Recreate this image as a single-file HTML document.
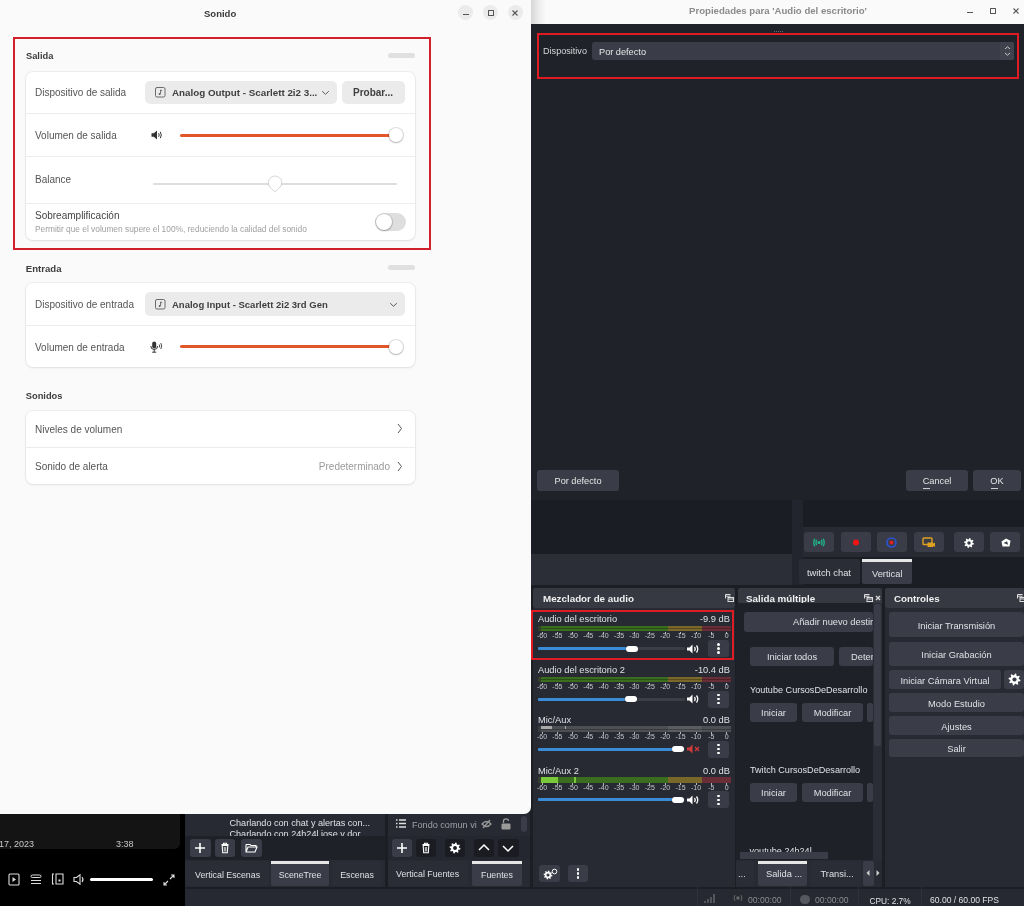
<!DOCTYPE html>
<html><head><meta charset="utf-8">
<style>
*{box-sizing:border-box;margin:0;padding:0}
html,body{width:1024px;height:906px;overflow:hidden;background:#1d1f26;font-family:"Liberation Sans",sans-serif;position:relative}
.t{-webkit-font-smoothing:antialiased}
body{will-change:transform}
.a{position:absolute}
.t{position:absolute;white-space:nowrap;line-height:1}
</style></head><body>
<div class="a" style="left:0px;top:0px;width:1024px;height:906px;background:#1c1e25;border-radius:0px;"></div>
<div class="a" style="left:531px;top:500px;width:261px;height:54px;background:#1b1d24;border-radius:0px;"></div>
<div class="a" style="left:531px;top:554px;width:261px;height:31px;background:#2b2e37;border-radius:0px;"></div>
<div class="a" style="left:792px;top:500px;width:11px;height:85px;background:#22252d;border-radius:0px;"></div>
<div class="a" style="left:803px;top:500px;width:221px;height:27px;background:#1b1d24;border-radius:0px;"></div>
<div class="a" style="left:803px;top:527px;width:221px;height:30px;background:#272a33;border-radius:0px;"></div>
<div class="a" style="left:804px;top:532px;width:30px;height:20px;background:#3a3d47;border-radius:3px;"></div>
<div class="a" style="left:841px;top:532px;width:30px;height:20px;background:#3a3d47;border-radius:3px;"></div>
<div class="a" style="left:877px;top:532px;width:30px;height:20px;background:#3a3d47;border-radius:3px;"></div>
<div class="a" style="left:914px;top:532px;width:30px;height:20px;background:#3a3d47;border-radius:3px;"></div>
<div class="a" style="left:954px;top:532px;width:30px;height:20px;background:#3a3d47;border-radius:3px;"></div>
<div class="a" style="left:990px;top:532px;width:30px;height:20px;background:#3a3d47;border-radius:3px;"></div>
<div class="a" style="left:799px;top:559px;width:61px;height:25px;background:#2a2d36;border-radius:2px;"></div>
<div class="t" style="left:807px;top:568.70px;font-size:9.3px;color:#dfe1e6;">twitch chat</div>
<div class="a" style="left:862px;top:559px;width:50px;height:25px;background:#3a3d47;border-radius:2px;"></div>
<div class="a" style="left:862px;top:559px;width:50px;height:3px;background:#e6e6e6;border-radius:0px;"></div>
<div class="t" style="left:872px;top:569.70px;font-size:9.3px;color:#dfe1e6;">Vertical</div>
<div class="a" style="left:533px;top:588px;width:202px;height:20px;background:#363942;border-radius:2px;"></div>
<div class="t" style="left:543px;top:594.27px;font-size:9.8px;color:#f0f0f0;font-weight:bold;">Mezclador de audio</div>
<div class="a" style="left:738px;top:588px;width:144px;height:15px;background:#363942;border-radius:0px;border-top-left-radius:2px;border-top-right-radius:2px"></div>
<div class="a" style="left:740px;top:588px;width:120px;height:14.5px;overflow:hidden"><div class="t" style="left:6px;top:5.7px;font-size:9.8px;color:#f0f0f0;font-weight:bold">Salida múltiple</div></div>
<div class="a" style="left:885px;top:588px;width:139px;height:20px;background:#363942;border-radius:2px;"></div>
<div class="t" style="left:894px;top:594.27px;font-size:9.8px;color:#f0f0f0;font-weight:bold;">Controles</div>
<div class="a" style="left:533px;top:608px;width:202px;height:279px;background:#272a33;border-radius:0px;"></div>
<div class="a" style="left:738px;top:608px;width:144px;height:279px;background:#272a33;border-radius:0px;"></div>
<div class="a" style="left:736px;top:602.5px;width:136.5px;height:257.5px;background:#1f2128;border-radius:0px;"></div>
<div class="a" style="left:872.5px;top:602.5px;width:9.5px;height:257.5px;background:#2a2d36;border-radius:0px;"></div>
<div class="a" style="left:885px;top:608px;width:139px;height:279px;background:#272a33;border-radius:0px;"></div>
<div class="a" style="left:0px;top:887px;width:1024px;height:1.5px;background:#1c1e25;border-radius:0px;"></div>
<div class="a" style="left:0px;top:888.5px;width:1024px;height:17.5px;background:#262931;border-radius:0px;"></div>
<div class="a" style="left:185px;top:813px;width:200px;height:74px;background:#272a33;border-radius:0px;"></div>
<div class="a" style="left:185px;top:813px;width:199px;height:23px;background:#272a33;border-radius:0px;"></div>
<div class="a" style="left:185px;top:836px;width:200px;height:24px;background:#1f2128;border-radius:0px;"></div>
<div class="a" style="left:388px;top:813px;width:142px;height:74px;background:#272a33;border-radius:0px;"></div>
<div class="a" style="left:388px;top:836px;width:142px;height:24px;background:#24272f;border-radius:0px;"></div>
<div class="a" style="left:0px;top:813px;width:185px;height:93px;background:#000000;border-radius:0px;"></div>
<div class="a" style="left:0px;top:813px;width:180px;height:36px;background:#141414;border-radius:0px;border-bottom-right-radius:6px"></div>
<div class="t" style="left:538px;top:615.20px;font-size:9.3px;color:#dfe1e6;">Audio del escritorio</div>
<div class="t" style="left:430px;width:300px;text-align:right;top:615.20px;font-size:9.3px;color:#dfe1e6;">-9.9 dB</div>
<div class="a" style="left:538px;top:625.8px;width:130px;height:5.600000000000023px;background:#3a6e1e;border-radius:0px;filter:brightness(0.72)"></div>
<div class="a" style="left:538px;top:625.8px;width:130px;height:2.3999999999999773px;background:#3a6e1e;border-radius:0px;"></div>
<div class="a" style="left:538px;top:629.0px;width:130px;height:2.3999999999999773px;background:#3a6e1e;border-radius:0px;"></div>
<div class="a" style="left:668px;top:625.8px;width:34px;height:5.600000000000023px;background:#7a682a;border-radius:0px;filter:brightness(0.72)"></div>
<div class="a" style="left:668px;top:625.8px;width:34px;height:2.3999999999999773px;background:#7a682a;border-radius:0px;"></div>
<div class="a" style="left:668px;top:629.0px;width:34px;height:2.3999999999999773px;background:#7a682a;border-radius:0px;"></div>
<div class="a" style="left:702px;top:625.8px;width:29px;height:5.600000000000023px;background:#6a2e38;border-radius:0px;filter:brightness(0.72)"></div>
<div class="a" style="left:702px;top:625.8px;width:29px;height:2.3999999999999773px;background:#6a2e38;border-radius:0px;"></div>
<div class="a" style="left:702px;top:629.0px;width:29px;height:2.3999999999999773px;background:#6a2e38;border-radius:0px;"></div>
<div class="a" style="left:538px;top:625.8px;width:3px;height:5.600000000000023px;background:#34402c;border-radius:0px;"></div>
<div class="a" style="left:541.5px;top:631.8px;width:1.0px;height:2.0px;background:#b8b8b8;border-radius:0px;"></div>
<div class="t" style="left:392.0px;width:300px;text-align:center;top:632.45px;font-size:7px;color:#c4c6cc;">-60</div>
<div class="a" style="left:556.9px;top:631.8px;width:1.0px;height:2.0px;background:#b8b8b8;border-radius:0px;"></div>
<div class="t" style="left:407.4px;width:300px;text-align:center;top:632.45px;font-size:7px;color:#c4c6cc;">-55</div>
<div class="a" style="left:572.3px;top:631.8px;width:1.0px;height:2.0px;background:#b8b8b8;border-radius:0px;"></div>
<div class="t" style="left:422.79999999999995px;width:300px;text-align:center;top:632.45px;font-size:7px;color:#c4c6cc;">-50</div>
<div class="a" style="left:587.7px;top:631.8px;width:1.0px;height:2.0px;background:#b8b8b8;border-radius:0px;"></div>
<div class="t" style="left:438.20000000000005px;width:300px;text-align:center;top:632.45px;font-size:7px;color:#c4c6cc;">-45</div>
<div class="a" style="left:603.1px;top:631.8px;width:1.0px;height:2.0px;background:#b8b8b8;border-radius:0px;"></div>
<div class="t" style="left:453.6px;width:300px;text-align:center;top:632.45px;font-size:7px;color:#c4c6cc;">-40</div>
<div class="a" style="left:618.5px;top:631.8px;width:1.0px;height:2.0px;background:#b8b8b8;border-radius:0px;"></div>
<div class="t" style="left:469.0px;width:300px;text-align:center;top:632.45px;font-size:7px;color:#c4c6cc;">-35</div>
<div class="a" style="left:633.9px;top:631.8px;width:1.0px;height:2.0px;background:#b8b8b8;border-radius:0px;"></div>
<div class="t" style="left:484.4px;width:300px;text-align:center;top:632.45px;font-size:7px;color:#c4c6cc;">-30</div>
<div class="a" style="left:649.3px;top:631.8px;width:1.0px;height:2.0px;background:#b8b8b8;border-radius:0px;"></div>
<div class="t" style="left:499.79999999999995px;width:300px;text-align:center;top:632.45px;font-size:7px;color:#c4c6cc;">-25</div>
<div class="a" style="left:664.7px;top:631.8px;width:1.0px;height:2.0px;background:#b8b8b8;border-radius:0px;"></div>
<div class="t" style="left:515.2px;width:300px;text-align:center;top:632.45px;font-size:7px;color:#c4c6cc;">-20</div>
<div class="a" style="left:680.1px;top:631.8px;width:1.0px;height:2.0px;background:#b8b8b8;border-radius:0px;"></div>
<div class="t" style="left:530.6px;width:300px;text-align:center;top:632.45px;font-size:7px;color:#c4c6cc;">-15</div>
<div class="a" style="left:695.5px;top:631.8px;width:1.0px;height:2.0px;background:#b8b8b8;border-radius:0px;"></div>
<div class="t" style="left:546.0px;width:300px;text-align:center;top:632.45px;font-size:7px;color:#c4c6cc;">-10</div>
<div class="a" style="left:710.9px;top:631.8px;width:1.0px;height:2.0px;background:#b8b8b8;border-radius:0px;"></div>
<div class="t" style="left:561.4px;width:300px;text-align:center;top:632.45px;font-size:7px;color:#c4c6cc;">-5</div>
<div class="a" style="left:726.3px;top:631.8px;width:1.0px;height:2.0px;background:#b8b8b8;border-radius:0px;"></div>
<div class="t" style="left:576.8px;width:300px;text-align:center;top:632.45px;font-size:7px;color:#c4c6cc;">0</div>
<div class="a" style="left:538px;top:647.0px;width:147px;height:3.0px;background:#3b3e47;border-radius:1px;"></div>
<div class="a" style="left:538px;top:647.0px;width:88px;height:3.0px;background:#3b8cd6;border-radius:1px;"></div>
<div class="a" style="left:626px;top:645.5px;width:12px;height:6.0px;background:#ffffff;border-radius:3px;"></div>
<svg class="a" style="left:687px;top:643.5px;" width="13" height="10" viewBox="0 0 13 10"><path d="M0 3.5H2.5L5.5 0.5V9.5L2.5 6.5H0Z" fill="#ffffff"/><path d="M7.5 3Q9 5 7.5 7M9.5 1.5Q12 5 9.5 8.5" stroke="#ffffff" stroke-width="1.3" fill="none"/></svg>
<div class="a" style="left:708px;top:640.0px;width:21px;height:17.0px;background:#3a3d47;border-radius:3px;"></div>
<div class="a" style="left:717.3px;top:643.3px;width:2.400000000000091px;height:2.400000000000091px;background:#ffffff;border-radius:2px;"></div>
<div class="a" style="left:717.3px;top:647.3px;width:2.400000000000091px;height:2.400000000000091px;background:#ffffff;border-radius:2px;"></div>
<div class="a" style="left:717.3px;top:651.3px;width:2.400000000000091px;height:2.400000000000091px;background:#ffffff;border-radius:2px;"></div>
<div class="t" style="left:538px;top:665.90px;font-size:9.3px;color:#dfe1e6;">Audio del escritorio 2</div>
<div class="t" style="left:430px;width:300px;text-align:right;top:665.90px;font-size:9.3px;color:#dfe1e6;">-10.4 dB</div>
<div class="a" style="left:538px;top:676.5px;width:130px;height:5.600000000000023px;background:#3a6e1e;border-radius:0px;filter:brightness(0.72)"></div>
<div class="a" style="left:538px;top:676.5px;width:130px;height:2.3999999999999773px;background:#3a6e1e;border-radius:0px;"></div>
<div class="a" style="left:538px;top:679.7px;width:130px;height:2.3999999999999773px;background:#3a6e1e;border-radius:0px;"></div>
<div class="a" style="left:668px;top:676.5px;width:34px;height:5.600000000000023px;background:#7a682a;border-radius:0px;filter:brightness(0.72)"></div>
<div class="a" style="left:668px;top:676.5px;width:34px;height:2.3999999999999773px;background:#7a682a;border-radius:0px;"></div>
<div class="a" style="left:668px;top:679.7px;width:34px;height:2.3999999999999773px;background:#7a682a;border-radius:0px;"></div>
<div class="a" style="left:702px;top:676.5px;width:29px;height:5.600000000000023px;background:#6a2e38;border-radius:0px;filter:brightness(0.72)"></div>
<div class="a" style="left:702px;top:676.5px;width:29px;height:2.3999999999999773px;background:#6a2e38;border-radius:0px;"></div>
<div class="a" style="left:702px;top:679.7px;width:29px;height:2.3999999999999773px;background:#6a2e38;border-radius:0px;"></div>
<div class="a" style="left:538px;top:676.5px;width:3px;height:5.600000000000023px;background:#34402c;border-radius:0px;"></div>
<div class="a" style="left:541.5px;top:682.5px;width:1.0px;height:2.0px;background:#b8b8b8;border-radius:0px;"></div>
<div class="t" style="left:392.0px;width:300px;text-align:center;top:683.15px;font-size:7px;color:#c4c6cc;">-60</div>
<div class="a" style="left:556.9px;top:682.5px;width:1.0px;height:2.0px;background:#b8b8b8;border-radius:0px;"></div>
<div class="t" style="left:407.4px;width:300px;text-align:center;top:683.15px;font-size:7px;color:#c4c6cc;">-55</div>
<div class="a" style="left:572.3px;top:682.5px;width:1.0px;height:2.0px;background:#b8b8b8;border-radius:0px;"></div>
<div class="t" style="left:422.79999999999995px;width:300px;text-align:center;top:683.15px;font-size:7px;color:#c4c6cc;">-50</div>
<div class="a" style="left:587.7px;top:682.5px;width:1.0px;height:2.0px;background:#b8b8b8;border-radius:0px;"></div>
<div class="t" style="left:438.20000000000005px;width:300px;text-align:center;top:683.15px;font-size:7px;color:#c4c6cc;">-45</div>
<div class="a" style="left:603.1px;top:682.5px;width:1.0px;height:2.0px;background:#b8b8b8;border-radius:0px;"></div>
<div class="t" style="left:453.6px;width:300px;text-align:center;top:683.15px;font-size:7px;color:#c4c6cc;">-40</div>
<div class="a" style="left:618.5px;top:682.5px;width:1.0px;height:2.0px;background:#b8b8b8;border-radius:0px;"></div>
<div class="t" style="left:469.0px;width:300px;text-align:center;top:683.15px;font-size:7px;color:#c4c6cc;">-35</div>
<div class="a" style="left:633.9px;top:682.5px;width:1.0px;height:2.0px;background:#b8b8b8;border-radius:0px;"></div>
<div class="t" style="left:484.4px;width:300px;text-align:center;top:683.15px;font-size:7px;color:#c4c6cc;">-30</div>
<div class="a" style="left:649.3px;top:682.5px;width:1.0px;height:2.0px;background:#b8b8b8;border-radius:0px;"></div>
<div class="t" style="left:499.79999999999995px;width:300px;text-align:center;top:683.15px;font-size:7px;color:#c4c6cc;">-25</div>
<div class="a" style="left:664.7px;top:682.5px;width:1.0px;height:2.0px;background:#b8b8b8;border-radius:0px;"></div>
<div class="t" style="left:515.2px;width:300px;text-align:center;top:683.15px;font-size:7px;color:#c4c6cc;">-20</div>
<div class="a" style="left:680.1px;top:682.5px;width:1.0px;height:2.0px;background:#b8b8b8;border-radius:0px;"></div>
<div class="t" style="left:530.6px;width:300px;text-align:center;top:683.15px;font-size:7px;color:#c4c6cc;">-15</div>
<div class="a" style="left:695.5px;top:682.5px;width:1.0px;height:2.0px;background:#b8b8b8;border-radius:0px;"></div>
<div class="t" style="left:546.0px;width:300px;text-align:center;top:683.15px;font-size:7px;color:#c4c6cc;">-10</div>
<div class="a" style="left:710.9px;top:682.5px;width:1.0px;height:2.0px;background:#b8b8b8;border-radius:0px;"></div>
<div class="t" style="left:561.4px;width:300px;text-align:center;top:683.15px;font-size:7px;color:#c4c6cc;">-5</div>
<div class="a" style="left:726.3px;top:682.5px;width:1.0px;height:2.0px;background:#b8b8b8;border-radius:0px;"></div>
<div class="t" style="left:576.8px;width:300px;text-align:center;top:683.15px;font-size:7px;color:#c4c6cc;">0</div>
<div class="a" style="left:538px;top:697.7px;width:147px;height:3.0px;background:#3b3e47;border-radius:1px;"></div>
<div class="a" style="left:538px;top:697.7px;width:86.5px;height:3.0px;background:#3b8cd6;border-radius:1px;"></div>
<div class="a" style="left:624.5px;top:696.2px;width:12.0px;height:6.0px;background:#ffffff;border-radius:3px;"></div>
<svg class="a" style="left:687px;top:694.2px;" width="13" height="10" viewBox="0 0 13 10"><path d="M0 3.5H2.5L5.5 0.5V9.5L2.5 6.5H0Z" fill="#ffffff"/><path d="M7.5 3Q9 5 7.5 7M9.5 1.5Q12 5 9.5 8.5" stroke="#ffffff" stroke-width="1.3" fill="none"/></svg>
<div class="a" style="left:708px;top:690.7px;width:21px;height:17.0px;background:#3a3d47;border-radius:3px;"></div>
<div class="a" style="left:717.3px;top:694.0px;width:2.400000000000091px;height:2.400000000000091px;background:#ffffff;border-radius:2px;"></div>
<div class="a" style="left:717.3px;top:698.0px;width:2.400000000000091px;height:2.400000000000091px;background:#ffffff;border-radius:2px;"></div>
<div class="a" style="left:717.3px;top:702.0px;width:2.400000000000091px;height:2.400000000000091px;background:#ffffff;border-radius:2px;"></div>
<div class="t" style="left:538px;top:715.70px;font-size:9.3px;color:#dfe1e6;">Mic/Aux</div>
<div class="t" style="left:430px;width:300px;text-align:right;top:715.70px;font-size:9.3px;color:#dfe1e6;">0.0 dB</div>
<div class="a" style="left:538px;top:726.3px;width:130px;height:5.600000000000023px;background:#4d4f55;border-radius:0px;filter:brightness(0.72)"></div>
<div class="a" style="left:538px;top:726.3px;width:130px;height:2.3999999999999773px;background:#4d4f55;border-radius:0px;"></div>
<div class="a" style="left:538px;top:729.5px;width:130px;height:2.3999999999999773px;background:#4d4f55;border-radius:0px;"></div>
<div class="a" style="left:668px;top:726.3px;width:34px;height:5.600000000000023px;background:#5a5c61;border-radius:0px;filter:brightness(0.72)"></div>
<div class="a" style="left:668px;top:726.3px;width:34px;height:2.3999999999999773px;background:#5a5c61;border-radius:0px;"></div>
<div class="a" style="left:668px;top:729.5px;width:34px;height:2.3999999999999773px;background:#5a5c61;border-radius:0px;"></div>
<div class="a" style="left:702px;top:726.3px;width:29px;height:5.600000000000023px;background:#4d4f55;border-radius:0px;filter:brightness(0.72)"></div>
<div class="a" style="left:702px;top:726.3px;width:29px;height:2.3999999999999773px;background:#4d4f55;border-radius:0px;"></div>
<div class="a" style="left:702px;top:729.5px;width:29px;height:2.3999999999999773px;background:#4d4f55;border-radius:0px;"></div>
<div class="a" style="left:538px;top:726.3px;width:3px;height:5.600000000000023px;background:#3a3c40;border-radius:0px;"></div>
<div class="a" style="left:541px;top:726.3px;width:11px;height:2.3999999999999773px;background:#a8a8a8;border-radius:0px;"></div>
<div class="a" style="left:564.5px;top:726.3px;width:1.5px;height:2.3999999999999773px;background:#a8a8a8;border-radius:0px;"></div>
<div class="a" style="left:541.5px;top:732.3px;width:1.0px;height:2.0px;background:#b8b8b8;border-radius:0px;"></div>
<div class="t" style="left:392.0px;width:300px;text-align:center;top:732.95px;font-size:7px;color:#c4c6cc;">-60</div>
<div class="a" style="left:556.9px;top:732.3px;width:1.0px;height:2.0px;background:#b8b8b8;border-radius:0px;"></div>
<div class="t" style="left:407.4px;width:300px;text-align:center;top:732.95px;font-size:7px;color:#c4c6cc;">-55</div>
<div class="a" style="left:572.3px;top:732.3px;width:1.0px;height:2.0px;background:#b8b8b8;border-radius:0px;"></div>
<div class="t" style="left:422.79999999999995px;width:300px;text-align:center;top:732.95px;font-size:7px;color:#c4c6cc;">-50</div>
<div class="a" style="left:587.7px;top:732.3px;width:1.0px;height:2.0px;background:#b8b8b8;border-radius:0px;"></div>
<div class="t" style="left:438.20000000000005px;width:300px;text-align:center;top:732.95px;font-size:7px;color:#c4c6cc;">-45</div>
<div class="a" style="left:603.1px;top:732.3px;width:1.0px;height:2.0px;background:#b8b8b8;border-radius:0px;"></div>
<div class="t" style="left:453.6px;width:300px;text-align:center;top:732.95px;font-size:7px;color:#c4c6cc;">-40</div>
<div class="a" style="left:618.5px;top:732.3px;width:1.0px;height:2.0px;background:#b8b8b8;border-radius:0px;"></div>
<div class="t" style="left:469.0px;width:300px;text-align:center;top:732.95px;font-size:7px;color:#c4c6cc;">-35</div>
<div class="a" style="left:633.9px;top:732.3px;width:1.0px;height:2.0px;background:#b8b8b8;border-radius:0px;"></div>
<div class="t" style="left:484.4px;width:300px;text-align:center;top:732.95px;font-size:7px;color:#c4c6cc;">-30</div>
<div class="a" style="left:649.3px;top:732.3px;width:1.0px;height:2.0px;background:#b8b8b8;border-radius:0px;"></div>
<div class="t" style="left:499.79999999999995px;width:300px;text-align:center;top:732.95px;font-size:7px;color:#c4c6cc;">-25</div>
<div class="a" style="left:664.7px;top:732.3px;width:1.0px;height:2.0px;background:#b8b8b8;border-radius:0px;"></div>
<div class="t" style="left:515.2px;width:300px;text-align:center;top:732.95px;font-size:7px;color:#c4c6cc;">-20</div>
<div class="a" style="left:680.1px;top:732.3px;width:1.0px;height:2.0px;background:#b8b8b8;border-radius:0px;"></div>
<div class="t" style="left:530.6px;width:300px;text-align:center;top:732.95px;font-size:7px;color:#c4c6cc;">-15</div>
<div class="a" style="left:695.5px;top:732.3px;width:1.0px;height:2.0px;background:#b8b8b8;border-radius:0px;"></div>
<div class="t" style="left:546.0px;width:300px;text-align:center;top:732.95px;font-size:7px;color:#c4c6cc;">-10</div>
<div class="a" style="left:710.9px;top:732.3px;width:1.0px;height:2.0px;background:#b8b8b8;border-radius:0px;"></div>
<div class="t" style="left:561.4px;width:300px;text-align:center;top:732.95px;font-size:7px;color:#c4c6cc;">-5</div>
<div class="a" style="left:726.3px;top:732.3px;width:1.0px;height:2.0px;background:#b8b8b8;border-radius:0px;"></div>
<div class="t" style="left:576.8px;width:300px;text-align:center;top:732.95px;font-size:7px;color:#c4c6cc;">0</div>
<div class="a" style="left:538px;top:747.5px;width:147px;height:3.0px;background:#3b3e47;border-radius:1px;"></div>
<div class="a" style="left:538px;top:747.5px;width:134px;height:3.0px;background:#3b8cd6;border-radius:1px;"></div>
<div class="a" style="left:672px;top:746px;width:12px;height:6px;background:#ffffff;border-radius:3px;"></div>
<svg class="a" style="left:687px;top:744px;" width="13" height="10" viewBox="0 0 13 10"><path d="M0 3.5H2.5L5.5 0.5V9.5L2.5 6.5H0Z" fill="#d03b3b"/><path d="M8 3L12 7M12 3L8 7" stroke="#d03b3b" stroke-width="1.3"/></svg>
<div class="a" style="left:708px;top:740.5px;width:21px;height:17.0px;background:#3a3d47;border-radius:3px;"></div>
<div class="a" style="left:717.3px;top:743.8px;width:2.400000000000091px;height:2.400000000000091px;background:#ffffff;border-radius:2px;"></div>
<div class="a" style="left:717.3px;top:747.8px;width:2.400000000000091px;height:2.400000000000091px;background:#ffffff;border-radius:2px;"></div>
<div class="a" style="left:717.3px;top:751.8px;width:2.400000000000091px;height:2.400000000000091px;background:#ffffff;border-radius:2px;"></div>
<div class="t" style="left:538px;top:766.60px;font-size:9.3px;color:#dfe1e6;">Mic/Aux 2</div>
<div class="t" style="left:430px;width:300px;text-align:right;top:766.60px;font-size:9.3px;color:#dfe1e6;">0.0 dB</div>
<div class="a" style="left:538px;top:777.1999999999999px;width:130px;height:5.600000000000023px;background:#3a6e1e;border-radius:0px;filter:brightness(0.72)"></div>
<div class="a" style="left:538px;top:777.1999999999999px;width:130px;height:2.3999999999999773px;background:#3a6e1e;border-radius:0px;"></div>
<div class="a" style="left:538px;top:780.4px;width:130px;height:2.3999999999999773px;background:#3a6e1e;border-radius:0px;"></div>
<div class="a" style="left:668px;top:777.1999999999999px;width:34px;height:5.600000000000023px;background:#7a682a;border-radius:0px;filter:brightness(0.72)"></div>
<div class="a" style="left:668px;top:777.1999999999999px;width:34px;height:2.3999999999999773px;background:#7a682a;border-radius:0px;"></div>
<div class="a" style="left:668px;top:780.4px;width:34px;height:2.3999999999999773px;background:#7a682a;border-radius:0px;"></div>
<div class="a" style="left:702px;top:777.1999999999999px;width:29px;height:5.600000000000023px;background:#6a2e38;border-radius:0px;filter:brightness(0.72)"></div>
<div class="a" style="left:702px;top:777.1999999999999px;width:29px;height:2.3999999999999773px;background:#6a2e38;border-radius:0px;"></div>
<div class="a" style="left:702px;top:780.4px;width:29px;height:2.3999999999999773px;background:#6a2e38;border-radius:0px;"></div>
<div class="a" style="left:538px;top:777.1999999999999px;width:3px;height:5.600000000000023px;background:#34402c;border-radius:0px;"></div>
<div class="a" style="left:541px;top:777.1999999999999px;width:17px;height:2.3999999999999773px;background:#78c83a;border-radius:0px;"></div>
<div class="a" style="left:541px;top:780.4px;width:17px;height:2.3999999999999773px;background:#78c83a;border-radius:0px;"></div>
<div class="a" style="left:574px;top:777.1999999999999px;width:2px;height:5.600000000000023px;background:#78c83a;border-radius:0px;"></div>
<div class="a" style="left:541.5px;top:783.1999999999999px;width:1.0px;height:2.0px;background:#b8b8b8;border-radius:0px;"></div>
<div class="t" style="left:392.0px;width:300px;text-align:center;top:783.85px;font-size:7px;color:#c4c6cc;">-60</div>
<div class="a" style="left:556.9px;top:783.1999999999999px;width:1.0px;height:2.0px;background:#b8b8b8;border-radius:0px;"></div>
<div class="t" style="left:407.4px;width:300px;text-align:center;top:783.85px;font-size:7px;color:#c4c6cc;">-55</div>
<div class="a" style="left:572.3px;top:783.1999999999999px;width:1.0px;height:2.0px;background:#b8b8b8;border-radius:0px;"></div>
<div class="t" style="left:422.79999999999995px;width:300px;text-align:center;top:783.85px;font-size:7px;color:#c4c6cc;">-50</div>
<div class="a" style="left:587.7px;top:783.1999999999999px;width:1.0px;height:2.0px;background:#b8b8b8;border-radius:0px;"></div>
<div class="t" style="left:438.20000000000005px;width:300px;text-align:center;top:783.85px;font-size:7px;color:#c4c6cc;">-45</div>
<div class="a" style="left:603.1px;top:783.1999999999999px;width:1.0px;height:2.0px;background:#b8b8b8;border-radius:0px;"></div>
<div class="t" style="left:453.6px;width:300px;text-align:center;top:783.85px;font-size:7px;color:#c4c6cc;">-40</div>
<div class="a" style="left:618.5px;top:783.1999999999999px;width:1.0px;height:2.0px;background:#b8b8b8;border-radius:0px;"></div>
<div class="t" style="left:469.0px;width:300px;text-align:center;top:783.85px;font-size:7px;color:#c4c6cc;">-35</div>
<div class="a" style="left:633.9px;top:783.1999999999999px;width:1.0px;height:2.0px;background:#b8b8b8;border-radius:0px;"></div>
<div class="t" style="left:484.4px;width:300px;text-align:center;top:783.85px;font-size:7px;color:#c4c6cc;">-30</div>
<div class="a" style="left:649.3px;top:783.1999999999999px;width:1.0px;height:2.0px;background:#b8b8b8;border-radius:0px;"></div>
<div class="t" style="left:499.79999999999995px;width:300px;text-align:center;top:783.85px;font-size:7px;color:#c4c6cc;">-25</div>
<div class="a" style="left:664.7px;top:783.1999999999999px;width:1.0px;height:2.0px;background:#b8b8b8;border-radius:0px;"></div>
<div class="t" style="left:515.2px;width:300px;text-align:center;top:783.85px;font-size:7px;color:#c4c6cc;">-20</div>
<div class="a" style="left:680.1px;top:783.1999999999999px;width:1.0px;height:2.0px;background:#b8b8b8;border-radius:0px;"></div>
<div class="t" style="left:530.6px;width:300px;text-align:center;top:783.85px;font-size:7px;color:#c4c6cc;">-15</div>
<div class="a" style="left:695.5px;top:783.1999999999999px;width:1.0px;height:2.0px;background:#b8b8b8;border-radius:0px;"></div>
<div class="t" style="left:546.0px;width:300px;text-align:center;top:783.85px;font-size:7px;color:#c4c6cc;">-10</div>
<div class="a" style="left:710.9px;top:783.1999999999999px;width:1.0px;height:2.0px;background:#b8b8b8;border-radius:0px;"></div>
<div class="t" style="left:561.4px;width:300px;text-align:center;top:783.85px;font-size:7px;color:#c4c6cc;">-5</div>
<div class="a" style="left:726.3px;top:783.1999999999999px;width:1.0px;height:2.0px;background:#b8b8b8;border-radius:0px;"></div>
<div class="t" style="left:576.8px;width:300px;text-align:center;top:783.85px;font-size:7px;color:#c4c6cc;">0</div>
<div class="a" style="left:538px;top:798.4px;width:147px;height:3.0px;background:#3b3e47;border-radius:1px;"></div>
<div class="a" style="left:538px;top:798.4px;width:134px;height:3.0px;background:#3b8cd6;border-radius:1px;"></div>
<div class="a" style="left:672px;top:796.9px;width:12px;height:6.0px;background:#ffffff;border-radius:3px;"></div>
<svg class="a" style="left:687px;top:794.9px;" width="13" height="10" viewBox="0 0 13 10"><path d="M0 3.5H2.5L5.5 0.5V9.5L2.5 6.5H0Z" fill="#ffffff"/><path d="M7.5 3Q9 5 7.5 7M9.5 1.5Q12 5 9.5 8.5" stroke="#ffffff" stroke-width="1.3" fill="none"/></svg>
<div class="a" style="left:708px;top:791.4px;width:21px;height:17.0px;background:#3a3d47;border-radius:3px;"></div>
<div class="a" style="left:717.3px;top:794.6999999999999px;width:2.400000000000091px;height:2.400000000000091px;background:#ffffff;border-radius:2px;"></div>
<div class="a" style="left:717.3px;top:798.6999999999999px;width:2.400000000000091px;height:2.400000000000091px;background:#ffffff;border-radius:2px;"></div>
<div class="a" style="left:717.3px;top:802.6999999999999px;width:2.400000000000091px;height:2.400000000000091px;background:#ffffff;border-radius:2px;"></div>
<div class="a" style="left:531px;top:610px;width:203px;height:50px;background:transparent;border-radius:0px;border:2.5px solid #e01b24"></div>
<div class="a" style="left:539px;top:865px;width:21px;height:17px;background:#3a3d47;border-radius:3px;"></div>
<div class="a" style="left:568px;top:865px;width:20px;height:17px;background:#3a3d47;border-radius:3px;"></div>
<div class="a" style="left:576.8px;top:868.3px;width:2.400000000000091px;height:2.400000000000091px;background:#fff;border-radius:2px;"></div>
<div class="a" style="left:576.8px;top:872.3px;width:2.400000000000091px;height:2.400000000000091px;background:#fff;border-radius:2px;"></div>
<div class="a" style="left:576.8px;top:876.3px;width:2.400000000000091px;height:2.400000000000091px;background:#fff;border-radius:2px;"></div>
<div class="a" style="left:744px;top:612px;width:129px;height:20px;background:#3a3d47;border-radius:3px;"></div>
<div class="t" style="left:793px;top:618.20px;font-size:9.3px;color:#dfe1e6;width:80px;overflow:hidden;">Añadir nuevo destir</div>
<div class="a" style="left:750px;top:647px;width:84px;height:19px;background:#3a3d47;border-radius:3px;"></div>
<div class="t" style="left:642px;width:300px;text-align:center;top:652.70px;font-size:9.3px;color:#dfe1e6;">Iniciar todos</div>
<div class="a" style="left:839px;top:647px;width:34px;height:19px;background:#3a3d47;border-radius:3px;"></div>
<div class="t" style="left:851px;top:652.70px;font-size:9.3px;color:#dfe1e6;width:22px;overflow:hidden;">Deter</div>
<div class="t" style="left:750px;top:686.37px;font-size:9.1px;color:#dfe1e6;">Youtube CursosDeDesarrollo</div>
<div class="a" style="left:750px;top:703px;width:47px;height:19px;background:#3a3d47;border-radius:3px;"></div>
<div class="t" style="left:623.5px;width:300px;text-align:center;top:709.20px;font-size:9.3px;color:#dfe1e6;">Iniciar</div>
<div class="a" style="left:802px;top:703px;width:61px;height:19px;background:#3a3d47;border-radius:3px;"></div>
<div class="t" style="left:682.5px;width:300px;text-align:center;top:709.20px;font-size:9.3px;color:#dfe1e6;">Modificar</div>
<div class="a" style="left:867px;top:703px;width:6px;height:19px;background:#3a3d47;border-radius:2px;"></div>
<div class="t" style="left:750px;top:766.37px;font-size:9.1px;color:#dfe1e6;">Twitch CursosDeDesarrollo</div>
<div class="a" style="left:750px;top:783px;width:47px;height:19px;background:#3a3d47;border-radius:3px;"></div>
<div class="t" style="left:623.5px;width:300px;text-align:center;top:789.20px;font-size:9.3px;color:#dfe1e6;">Iniciar</div>
<div class="a" style="left:802px;top:783px;width:61px;height:19px;background:#3a3d47;border-radius:3px;"></div>
<div class="t" style="left:682.5px;width:300px;text-align:center;top:789.20px;font-size:9.3px;color:#dfe1e6;">Modificar</div>
<div class="a" style="left:867px;top:783px;width:6px;height:19px;background:#3a3d47;border-radius:2px;"></div>
<div class="a" style="left:874px;top:604px;width:6.5px;height:142px;background:#3a3d47;border-radius:2px;"></div>
<div class="a" style="left:889px;top:612px;width:135px;height:25px;background:#3a3d47;border-radius:3px;"></div>
<div class="t" style="left:806.5px;width:300px;text-align:center;top:621.70px;font-size:9.3px;color:#dfe1e6;">Iniciar Transmisión</div>
<div class="a" style="left:889px;top:642px;width:135px;height:24px;background:#3a3d47;border-radius:3px;"></div>
<div class="t" style="left:806.5px;width:300px;text-align:center;top:651.20px;font-size:9.3px;color:#dfe1e6;">Iniciar Grabación</div>
<div class="a" style="left:889px;top:670px;width:112px;height:19px;background:#3a3d47;border-radius:3px;"></div>
<div class="t" style="left:795.0px;width:300px;text-align:center;top:676.70px;font-size:9.3px;color:#dfe1e6;">Iniciar Cámara Virtual</div>
<div class="a" style="left:1004px;top:670px;width:20px;height:19px;background:#3a3d47;border-radius:3px;"></div>
<div class="a" style="left:889px;top:693px;width:135px;height:19px;background:#3a3d47;border-radius:3px;"></div>
<div class="t" style="left:806.5px;width:300px;text-align:center;top:699.70px;font-size:9.3px;color:#dfe1e6;">Modo Estudio</div>
<div class="a" style="left:889px;top:716px;width:135px;height:19px;background:#3a3d47;border-radius:3px;"></div>
<div class="t" style="left:806.5px;width:300px;text-align:center;top:722.70px;font-size:9.3px;color:#dfe1e6;">Ajustes</div>
<div class="a" style="left:889px;top:739px;width:135px;height:18px;background:#3a3d47;border-radius:3px;"></div>
<div class="t" style="left:806.5px;width:300px;text-align:center;top:745.20px;font-size:9.3px;color:#dfe1e6;">Salir</div>
<div class="a" style="left:749px;top:840px;width:120px;height:12px;overflow:hidden"><div class="t" style="left:0.5px;top:7.3px;font-size:9.1px;color:#dfe1e6">youtube 24h24l</div></div>
<div class="a" style="left:740px;top:852px;width:88px;height:6.5px;background:#3a3d47;border-radius:0px;"></div>
<div class="a" style="left:736px;top:860px;width:146px;height:27px;background:#272a33;border-radius:0px;"></div>
<div class="a" style="left:736px;top:861px;width:18px;height:25px;background:#2a2d36;border-radius:2px;"></div>
<div class="t" style="left:738px;top:869.70px;font-size:9.3px;color:#dfe1e6;">...</div>
<div class="a" style="left:758px;top:861px;width:49px;height:25px;background:#3a3d47;border-radius:2px;"></div>
<div class="a" style="left:758px;top:861px;width:49px;height:3px;background:#e6e6e6;border-radius:0px;"></div>
<div class="t" style="left:766px;top:870.20px;font-size:9.3px;color:#dfe1e6;">Salida ...</div>
<div class="a" style="left:810px;top:861px;width:51px;height:25px;background:#2a2d36;border-radius:2px;"></div>
<div class="t" style="left:820.5px;top:870.20px;font-size:9.3px;color:#dfe1e6;">Transi...</div>
<div class="a" style="left:863px;top:861px;width:11px;height:25px;background:#3a3d47;border-radius:2px;"></div>
<svg class="a" style="left:865px;top:869px;" width="6" height="8" viewBox="0 0 6 8"><path d="M4.5 1L1.5 4L4.5 7Z" fill="#cfcfcf"/></svg>
<svg class="a" style="left:875px;top:869px;" width="6" height="8" viewBox="0 0 6 8"><path d="M1.5 1L4.5 4L1.5 7Z" fill="#cfcfcf"/></svg>
<div class="t" style="left:229.5px;top:819.37px;font-size:9.1px;color:#dfe1e6;">Charlando con chat y alertas con...</div>
<div class="a" style="left:229px;top:829px;width:150px;height:7px;overflow:hidden"><div class="t" style="left:0.5px;top:1.3px;font-size:9.1px;color:#dfe1e6">Charlando con 24h24l jose y dor</div></div>
<div class="a" style="left:190px;top:839px;width:21px;height:18px;background:#3a3d47;border-radius:3px;"></div>
<svg class="a" style="left:194px;top:842px;" width="12" height="12" viewBox="0 0 12 12"><path d="M6 1V11M1 6H11" stroke="#fff" stroke-width="1.6"/></svg>
<div class="a" style="left:215px;top:839px;width:20px;height:18px;background:#3a3d47;border-radius:3px;"></div>
<svg class="a" style="left:219px;top:842px;" width="12" height="12" viewBox="0 0 12 12"><path d="M2.5 2.5H9.5M4.5 2.5V1.2H7.5V2.5M3.2 3.5L3.7 10.8H8.3L8.8 3.5Z" stroke="#fff" stroke-width="1.1" fill="none"/><rect x="4.8" y="5" width="2.4" height="4.5" fill="#aaa"/></svg>
<div class="a" style="left:241px;top:839px;width:21px;height:18px;background:#3a3d47;border-radius:3px;"></div>
<svg class="a" style="left:245px;top:842px;" width="13" height="12" viewBox="0 0 13 12"><path d="M1 2.5H5L6 3.5H11V5M1 2.5V10H10L12 5H3L1 10" stroke="#fff" stroke-width="1.1" fill="none"/></svg>
<div class="a" style="left:185px;top:861px;width:84px;height:25px;background:#2a2d36;border-radius:2px;"></div>
<div class="t" style="left:195px;top:870.62px;font-size:8.8px;color:#dfe1e6;">Vertical Escenas</div>
<div class="a" style="left:271px;top:861px;width:58px;height:25px;background:#3a3d47;border-radius:2px;"></div>
<div class="a" style="left:271px;top:861px;width:58px;height:3px;background:#e6e6e6;border-radius:0px;"></div>
<div class="t" style="left:150px;width:300px;text-align:center;top:871.12px;font-size:8.8px;color:#dfe1e6;">SceneTree</div>
<div class="a" style="left:332px;top:861px;width:50px;height:25px;background:#2a2d36;border-radius:2px;"></div>
<div class="t" style="left:207px;width:300px;text-align:center;top:870.62px;font-size:8.8px;color:#dfe1e6;">Escenas</div>
<svg class="a" style="left:396px;top:819px;" width="10" height="10" viewBox="0 0 10 10"><path d="M0 1H1.5M0 4.5H1.5M0 8H1.5M3 1H10M3 4.5H10M3 8H10" stroke="#e0e0e0" stroke-width="1.4"/></svg>
<div class="t" style="left:412px;top:820.87px;font-size:9.1px;color:#9ea0a6;">Fondo comun vi</div>
<svg class="a" style="left:481px;top:819px;" width="11" height="10" viewBox="0 0 11 10"><path d="M1 5Q5.5 0 10 5Q5.5 10 1 5Z" stroke="#9a9a9a" stroke-width="1.3" fill="none"/><path d="M2 9L9 1" stroke="#9a9a9a" stroke-width="1.3"/></svg>
<svg class="a" style="left:501px;top:818px;" width="10" height="12" viewBox="0 0 10 12"><path d="M2.5 5V3Q2.5 0.8 5 0.8Q7.5 0.8 7.5 3" stroke="#9a9a9a" stroke-width="1.3" fill="none"/><rect x="0.5" y="5.5" width="9" height="6" rx="1" fill="#9a9a9a"/></svg>
<div class="a" style="left:521px;top:816px;width:6px;height:16px;background:#3a3d47;border-radius:3px;"></div>
<div class="a" style="left:392px;top:839px;width:20px;height:18px;background:#3a3d47;border-radius:3px;"></div>
<svg class="a" style="left:396px;top:842px;" width="12" height="12" viewBox="0 0 12 12"><path d="M6 1V11M1 6H11" stroke="#fff" stroke-width="1.6"/></svg>
<div class="a" style="left:416px;top:839px;width:20px;height:18px;background:#1a1c22;border-radius:3px;"></div>
<svg class="a" style="left:420px;top:842px;" width="12" height="12" viewBox="0 0 12 12"><path d="M2.5 2.5H9.5M4.5 2.5V1.2H7.5V2.5M3.2 3.5L3.7 10.8H8.3L8.8 3.5Z" stroke="#fff" stroke-width="1.1" fill="none"/><rect x="4.8" y="5" width="2.4" height="4.5" fill="#aaa"/></svg>
<div class="a" style="left:445px;top:839px;width:20px;height:18px;background:#1a1c22;border-radius:3px;"></div>
<div class="a" style="left:474px;top:839px;width:20px;height:18px;background:#1a1c22;border-radius:3px;"></div>
<svg class="a" style="left:478px;top:843px;" width="12" height="8" viewBox="0 0 12 8"><path d="M1 7L6 2L11 7" stroke="#fff" stroke-width="1.5" fill="none"/></svg>
<div class="a" style="left:498px;top:839px;width:21px;height:18px;background:#1a1c22;border-radius:3px;"></div>
<svg class="a" style="left:502px;top:845px;" width="12" height="8" viewBox="0 0 12 8"><path d="M1 1L6 6L11 1" stroke="#fff" stroke-width="1.5" fill="none"/></svg>
<div class="a" style="left:388px;top:861px;width:80px;height:25px;background:#2a2d36;border-radius:2px;"></div>
<div class="t" style="left:396px;top:870.12px;font-size:8.8px;color:#dfe1e6;">Vertical Fuentes</div>
<div class="a" style="left:472px;top:861px;width:50px;height:25px;background:#3a3d47;border-radius:2px;"></div>
<div class="a" style="left:472px;top:861px;width:50px;height:3px;background:#e6e6e6;border-radius:0px;"></div>
<div class="t" style="left:347px;width:300px;text-align:center;top:870.62px;font-size:8.8px;color:#dfe1e6;">Fuentes</div>
<svg class="a" style="left:449px;top:842px;" width="12" height="12" viewBox="0 0 12 12"><polygon points="11.47,6.54 11.26,7.60 9.49,7.87 9.06,8.51 9.49,10.25 8.59,10.85 7.15,9.79 6.39,9.94 5.46,11.47 4.40,11.26 4.13,9.49 3.49,9.06 1.75,9.49 1.15,8.59 2.21,7.15 2.06,6.39 0.53,5.46 0.74,4.40 2.51,4.13 2.94,3.49 2.51,1.75 3.41,1.15 4.85,2.21 5.61,2.06 6.54,0.53 7.60,0.74 7.87,2.51 8.51,2.94 10.25,2.51 10.85,3.41 9.79,4.85 9.94,5.61" fill="#fff"/><circle cx="6" cy="6" r="1.9249999999999998" fill="#1b1d24"/></svg>
<svg class="a" style="left:963px;top:537px;" width="12" height="12" viewBox="0 0 12 12"><polygon points="10.98,6.49 10.78,7.45 9.17,7.70 8.78,8.28 9.17,9.87 8.36,10.41 7.05,9.44 6.35,9.58 5.51,10.98 4.55,10.78 4.30,9.17 3.72,8.78 2.13,9.17 1.59,8.36 2.56,7.05 2.42,6.35 1.02,5.51 1.22,4.55 2.83,4.30 3.22,3.72 2.83,2.13 3.64,1.59 4.95,2.56 5.65,2.42 6.49,1.02 7.45,1.22 7.70,2.83 8.28,3.22 9.87,2.83 10.41,3.64 9.44,4.95 9.58,5.65" fill="#fff"/><circle cx="6" cy="6" r="1.75" fill="#3a3d47"/></svg>
<svg class="a" style="left:1008px;top:673px;" width="13" height="13" viewBox="0 0 13 13"><polygon points="12.47,7.09 12.24,8.24 10.31,8.54 9.84,9.24 10.31,11.14 9.33,11.79 7.75,10.63 6.92,10.80 5.91,12.47 4.76,12.24 4.46,10.31 3.76,9.84 1.86,10.31 1.21,9.33 2.37,7.75 2.20,6.92 0.53,5.91 0.76,4.76 2.69,4.46 3.16,3.76 2.69,1.86 3.67,1.21 5.25,2.37 6.08,2.20 7.09,0.53 8.24,0.76 8.54,2.69 9.24,3.16 11.14,2.69 11.79,3.67 10.63,5.25 10.80,6.08" fill="#fff"/><circle cx="6.5" cy="6.5" r="2.0999999999999996" fill="#3a3d47"/></svg>
<svg class="a" style="left:543px;top:868px;" width="16" height="12" viewBox="0 0 16 12"><polygon points="9.48,7.44 9.31,8.31 7.86,8.53 7.50,9.06 7.85,10.48 7.12,10.97 5.94,10.10 5.32,10.22 4.56,11.48 3.69,11.31 3.47,9.86 2.94,9.50 1.52,9.85 1.03,9.12 1.90,7.94 1.78,7.32 0.52,6.56 0.69,5.69 2.14,5.47 2.50,4.94 2.15,3.52 2.88,3.03 4.06,3.90 4.68,3.78 5.44,2.52 6.31,2.69 6.53,4.14 7.06,4.50 8.48,4.15 8.97,4.88 8.10,6.06 8.22,6.68" fill="#fff"/><circle cx="5" cy="7" r="1.575" fill="#3a3d47"/><circle cx="11.5" cy="3.5" r="2.3" stroke="#fff" stroke-width="1" fill="none"/></svg>
<svg class="a" style="left:813px;top:538px;" width="12" height="9" viewBox="0 0 12 9"><circle cx="6" cy="4.5" r="1.6" fill="#1fb88a"/><path d="M3.6 1.8Q2.4 4.5 3.6 7.2M8.4 1.8Q9.6 4.5 8.4 7.2M1.8 0.8Q-0.2 4.5 1.8 8.2M10.2 0.8Q12.2 4.5 10.2 8.2" stroke="#1fb88a" stroke-width="1.3" fill="none"/></svg>
<svg class="a" style="left:851px;top:538px;" width="10" height="10" viewBox="0 0 10 10"><circle cx="5" cy="4.5" r="3" fill="#f01414"/></svg>
<svg class="a" style="left:885px;top:536px;" width="13" height="13" viewBox="0 0 13 13"><circle cx="6.5" cy="6.5" r="4.5" stroke="#2e54d6" stroke-width="1.6" fill="none"/><circle cx="6.5" cy="6.5" r="2" fill="#e02020"/></svg>
<svg class="a" style="left:922px;top:537px;" width="14" height="11" viewBox="0 0 14 11"><rect x="1" y="1" width="9" height="6.5" rx="0.8" stroke="#e0a020" stroke-width="1.4" fill="none"/><rect x="5.5" y="5.5" width="5.5" height="4.5" fill="#e0a020"/><path d="M11 6.5L13 5.5V10L11 9Z" fill="#e0a020"/></svg>
<svg class="a" style="left:1001px;top:538px;" width="10" height="10" viewBox="0 0 10 10"><path d="M5 0.5L9.5 2.8L8.5 8.5L1.5 8.5L0.5 3.5Z" fill="#fff"/><path d="M2.5 5L6 3.2L7.2 6.8Z" fill="#3a3d47"/></svg>
<div class="a" style="left:697px;top:887px;width:1px;height:19px;background:#2e313a;border-radius:0px;"></div>
<svg class="a" style="left:704px;top:893px;" width="12" height="11" viewBox="0 0 12 11"><path d="M1 10V8M4 10V6M7 10V4M10 10V1" stroke="#5f6168" stroke-width="1.6"/></svg>
<div class="a" style="left:790px;top:887px;width:1px;height:19px;background:#2e313a;border-radius:0px;"></div>
<svg class="a" style="left:733px;top:893px;" width="11" height="10" viewBox="0 0 11 10"><circle cx="5" cy="5" r="1.8" fill="#666"/><path d="M2 2Q0 5 2 8M8 2Q10 5 8 8" stroke="#666" stroke-width="1" fill="none"/></svg>
<div class="t" style="left:748px;top:896.29px;font-size:8.6px;color:#8a8c92;">00:00:00</div>
<div class="a" style="left:800.3px;top:894.8px;width:9.4px;height:9.4px;border-radius:50%;background:#55585f"></div>
<div class="t" style="left:815px;top:896.29px;font-size:8.6px;color:#8a8c92;">00:00:00</div>
<div class="a" style="left:858px;top:887px;width:1px;height:19px;background:#2e313a;border-radius:0px;"></div>
<div class="t" style="left:869.5px;top:896.55px;font-size:8.3px;color:#dfe1e6;">CPU: 2.7%</div>
<div class="a" style="left:921px;top:887px;width:1px;height:19px;background:#2e313a;border-radius:0px;"></div>
<div class="t" style="left:930px;top:896.32px;font-size:8.56px;color:#dfe1e6;">60.00 / 60.00 FPS</div>
<div class="t" style="left:-1px;top:840.45px;font-size:9px;color:#c8c8c8;">17, 2023</div>
<div class="t" style="left:116px;top:840.45px;font-size:9px;color:#c8c8c8;">3:38</div>
<svg class="a" style="left:8px;top:873px;" width="12" height="13" viewBox="0 0 12 13"><rect x="1" y="1" width="10" height="11" rx="1" stroke="#ddd" stroke-width="1.1" fill="none"/><path d="M4.5 4L8 6.5L4.5 9Z" fill="#ddd"/></svg>
<svg class="a" style="left:30px;top:874px;" width="12" height="11" viewBox="0 0 12 11"><rect x="1" y="1" width="10" height="2.5" rx="1.2" stroke="#ddd" stroke-width="1" fill="none"/><path d="M1 6.5H11M1 9.5H11" stroke="#ddd" stroke-width="1.1"/></svg>
<svg class="a" style="left:51px;top:873px;" width="13" height="12" viewBox="0 0 13 12"><path d="M3 1H1.5V11H3M5 1H12V11H5Z" stroke="#ddd" stroke-width="1.1" fill="none"/><rect x="7.5" y="6.5" width="2" height="2" fill="#ddd"/></svg>
<svg class="a" style="left:73px;top:874px;" width="13" height="11" viewBox="0 0 13 11"><path d="M1 3.5H3.5L7 0.8V10.2L3.5 7.5H1Z" stroke="#ddd" stroke-width="1.1" fill="none"/><path d="M9 3Q11 5.5 9 8" stroke="#ddd" stroke-width="1.1" fill="none"/></svg>
<div class="a" style="left:90px;top:878px;width:63px;height:3px;background:#ffffff;border-radius:2px;"></div>
<svg class="a" style="left:163px;top:874px;" width="12" height="12" viewBox="0 0 12 12"><path d="M7 5L11 1M8 1H11V4M5 7L1 11M1 8V11H4" stroke="#ddd" stroke-width="1.1" fill="none"/></svg>
<svg class="a" style="left:725px;top:594px;" width="9" height="8" viewBox="0 0 9 8"><path d="M0.5 0.5H5.5M0.5 0.5V4.5M0.5 2.2H5.5" stroke="#ddd" stroke-width="1" fill="none"/><rect x="3" y="3.5" width="5.5" height="4" stroke="#ddd" stroke-width="1" fill="none"/><path d="M3 5H8.5" stroke="#ddd" stroke-width="1"/></svg>
<svg class="a" style="left:864px;top:594px;" width="9" height="8" viewBox="0 0 9 8"><path d="M0.5 0.5H5.5M0.5 0.5V4.5M0.5 2.2H5.5" stroke="#ddd" stroke-width="1" fill="none"/><rect x="3" y="3.5" width="5.5" height="4" stroke="#ddd" stroke-width="1" fill="none"/><path d="M3 5H8.5" stroke="#ddd" stroke-width="1"/></svg>
<svg class="a" style="left:875px;top:595px;" width="6" height="6" viewBox="0 0 6 6"><path d="M1 1L5 5M5 1L1 5" stroke="#ddd" stroke-width="1.2"/></svg>
<svg class="a" style="left:1017px;top:594px;" width="9" height="8" viewBox="0 0 9 8"><path d="M0.5 0.5H5.5M0.5 0.5V4.5M0.5 2.2H5.5" stroke="#ddd" stroke-width="1" fill="none"/><rect x="3" y="3.5" width="5.5" height="4" stroke="#ddd" stroke-width="1" fill="none"/><path d="M3 5H8.5" stroke="#ddd" stroke-width="1"/></svg>
<div class="a" style="left:0;top:0;width:531px;height:814px;background:#fafafa;border-bottom-right-radius:7px;overflow:hidden">
<div class="t" style="left:204px;top:8.53px;font-size:9.5px;color:#3a3a3a;font-weight:bold;">Sonido</div>
<div class="a" style="left:458.0px;top:5px;width:15.0px;height:15px;background:#ebebeb;border-radius:8px;"></div>
<div class="a" style="left:483.0px;top:5px;width:15.0px;height:15px;background:#ebebeb;border-radius:8px;"></div>
<div class="a" style="left:508.0px;top:5px;width:15.0px;height:15px;background:#ebebeb;border-radius:8px;"></div>
<div class="a" style="left:463px;top:13.5px;width:5.5px;height:1.0999999999999996px;background:#555;border-radius:0px;"></div>
<div class="a" style="left:488px;top:10px;width:5.5px;height:5.5px;background:transparent;border-radius:0.5px;border:1.1px solid #555"></div>
<svg class="a" style="left:512px;top:10px;" width="6" height="6" viewBox="0 0 6 6"><path d="M0.5 0.5L5.5 5.5M5.5 0.5L0.5 5.5" stroke="#555" stroke-width="1.1"/></svg>
<div class="t" style="left:26px;top:52.20px;font-size:9.3px;color:#3d3d3d;font-weight:bold;">Salida</div>
<div class="a" style="left:388px;top:53px;width:27px;height:5px;background:#e0e0e0;border-radius:3px;"></div>
<div class="a" style="left:26px;top:72px;width:389px;height:168px;background:#ffffff;border-radius:7px;box-shadow:0 0 0 1px rgba(0,0,0,0.045),0 1px 3px rgba(0,0,0,0.07)"></div>
<div class="t" style="left:35px;top:88.10px;font-size:10px;color:#555555;">Dispositivo de salida</div>
<div class="a" style="left:145px;top:81px;width:192px;height:23px;background:#ebebeb;border-radius:5px;"></div>
<div class="a" style="left:342px;top:81px;width:63px;height:23px;background:#ebebeb;border-radius:5px;"></div>
<div class="t" style="left:172px;top:88.07px;font-size:9.8px;color:#404040;font-weight:bold;">Analog Output - Scarlett 2i2 3...</div>
<div class="t" style="left:353px;top:87.90px;font-size:10px;color:#404040;font-weight:bold;">Probar...</div>
<div class="a" style="left:26px;top:113px;width:389px;height:1px;background:#ededed;border-radius:0px;"></div>
<div class="t" style="left:35px;top:131.10px;font-size:10px;color:#555555;">Volumen de salida</div>
<div class="a" style="left:26px;top:156px;width:389px;height:1px;background:#ededed;border-radius:0px;"></div>
<div class="t" style="left:35px;top:175.10px;font-size:10px;color:#555555;">Balance</div>
<div class="a" style="left:26px;top:203px;width:389px;height:1px;background:#ededed;border-radius:0px;"></div>
<div class="t" style="left:35px;top:210.60px;font-size:10px;color:#444444;">Sobreamplificación</div>
<div class="t" style="left:35px;top:225.00px;font-size:8.35px;color:#a0a0a0;">Permitir que el volumen supere el 100%, reduciendo la calidad del sonido</div>
<div class="t" style="left:25.8px;top:263.94px;font-size:9.6px;color:#3d3d3d;font-weight:bold;">Entrada</div>
<div class="a" style="left:388px;top:265px;width:27px;height:5px;background:#e0e0e0;border-radius:3px;"></div>
<div class="a" style="left:26px;top:283px;width:389px;height:84px;background:#ffffff;border-radius:7px;box-shadow:0 0 0 1px rgba(0,0,0,0.045),0 1px 3px rgba(0,0,0,0.07)"></div>
<div class="t" style="left:35px;top:300.10px;font-size:10px;color:#555555;">Dispositivo de entrada</div>
<div class="a" style="left:145px;top:292px;width:260px;height:24px;background:#ebebeb;border-radius:5px;"></div>
<div class="t" style="left:172px;top:300.03px;font-size:9.5px;color:#404040;font-weight:bold;">Analog Input - Scarlett 2i2 3rd Gen</div>
<div class="a" style="left:26px;top:325px;width:389px;height:1px;background:#ededed;border-radius:0px;"></div>
<div class="t" style="left:35px;top:342.60px;font-size:10px;color:#555555;">Volumen de entrada</div>
<div class="t" style="left:25.8px;top:392.20px;font-size:9.3px;color:#3d3d3d;font-weight:bold;">Sonidos</div>
<div class="a" style="left:26px;top:411px;width:389px;height:73px;background:#ffffff;border-radius:7px;box-shadow:0 0 0 1px rgba(0,0,0,0.045),0 1px 3px rgba(0,0,0,0.07)"></div>
<div class="t" style="left:35px;top:425.10px;font-size:10px;color:#555555;">Niveles de volumen</div>
<div class="a" style="left:26px;top:447px;width:389px;height:1px;background:#ededed;border-radius:0px;"></div>
<div class="t" style="left:35px;top:462.10px;font-size:10px;color:#555555;">Sonido de alerta</div>
<div class="t" style="left:90px;width:300px;text-align:right;top:462.10px;font-size:10px;color:#9a9a9a;">Predeterminado</div>
<svg class="a" style="left:155px;top:87px;" width="11" height="11" viewBox="0 0 11 11"><rect x="0.5" y="0.5" width="9.5" height="9.5" rx="1.5" stroke="#5c5c5c" stroke-width="0.9" fill="none"/><path d="M5.6 3V6.8M5.6 3L7.2 3.7" stroke="#5c5c5c" stroke-width="0.9" fill="none"/><circle cx="4.6" cy="6.9" r="1" fill="#5c5c5c"/></svg>
<svg class="a" style="left:155px;top:298.5px;" width="11" height="11" viewBox="0 0 11 11"><rect x="0.5" y="0.5" width="9.5" height="9.5" rx="1.5" stroke="#5c5c5c" stroke-width="0.9" fill="none"/><path d="M5.6 3V6.8M5.6 3L7.2 3.7" stroke="#5c5c5c" stroke-width="0.9" fill="none"/><circle cx="4.6" cy="6.9" r="1" fill="#5c5c5c"/></svg>
<svg class="a" style="left:320.5px;top:90px;" width="9" height="6" viewBox="0 0 9 6"><path d="M1.2 1.2L4.5 4.3L7.8 1.2" stroke="#5a5a5a" stroke-width="1" fill="none"/></svg>
<svg class="a" style="left:388.5px;top:301.5px;" width="9" height="6" viewBox="0 0 9 6"><path d="M1.2 1.2L4.5 4.3L7.8 1.2" stroke="#5a5a5a" stroke-width="1" fill="none"/></svg>
<svg class="a" style="left:151px;top:130px;" width="12" height="10" viewBox="0 0 12 10"><path d="M0.5 3.2H2.8L6 0.5V9.5L2.8 6.8H0.5Z" fill="#333"/><path d="M7.6 3.2Q8.8 5 7.6 6.8M9.3 1.8Q11.3 5 9.3 8.2" stroke="#333" stroke-width="1" fill="none"/></svg>
<svg class="a" style="left:150px;top:341px;" width="13" height="12" viewBox="0 0 13 12"><rect x="2.2" y="0.5" width="4" height="7" rx="2" fill="#333"/><path d="M0.8 5Q0.8 8.5 4.2 8.5Q7.6 8.5 7.6 5M4.2 8.5V11.2M2.2 11.2H6.2" stroke="#333" stroke-width="1" fill="none"/><path d="M9.2 3.5Q10.3 5 9.2 6.5M10.8 2Q12.6 5 10.8 8" stroke="#333" stroke-width="0.9" fill="none"/></svg>
<div class="a" style="left:180px;top:133.5px;width:216px;height:3.0px;background:#e2572a;border-radius:2px;"></div>
<div class="a" style="left:388.5px;top:128px;width:14px;height:14px;border-radius:50%;background:#fff;box-shadow:0 0 0 1px rgba(0,0,0,0.12),0 1px 2px rgba(0,0,0,0.2)"></div>
<div class="a" style="left:153px;top:182.5px;width:244px;height:2.0px;background:#dddddd;border-radius:1px;"></div>
<svg class="a" style="left:267px;top:175px;" width="16" height="18" viewBox="0 0 16 18"><path d="M8 1A6.8 6.8 0 0 1 14.8 7.8Q14.8 10.8 12.3 13L8.6 16.3Q8 16.8 7.4 16.3L3.7 13Q1.2 10.8 1.2 7.8A6.8 6.8 0 0 1 8 1Z" fill="#fff" stroke="rgba(0,0,0,0.16)" stroke-width="1"/></svg>
<div class="a" style="left:375px;top:212.5px;width:30.5px;height:18.0px;background:#dedede;border-radius:9px;"></div>
<div class="a" style="left:375.5px;top:213.5px;width:16px;height:16px;border-radius:50%;background:#fff;box-shadow:0 0 0 1px rgba(0,0,0,0.1),0 1px 2px rgba(0,0,0,0.25)"></div>
<div class="a" style="left:180px;top:345.2px;width:216px;height:3.0px;background:#e2572a;border-radius:2px;"></div>
<div class="a" style="left:388.5px;top:339.7px;width:14px;height:14px;border-radius:50%;background:#fff;box-shadow:0 0 0 1px rgba(0,0,0,0.12),0 1px 2px rgba(0,0,0,0.2)"></div>
<svg class="a" style="left:396.5px;top:423px;" width="6" height="11" viewBox="0 0 6 11"><path d="M1 1L4.5 5.5L1 10" stroke="#555" stroke-width="1" fill="none"/></svg>
<svg class="a" style="left:396.5px;top:461px;" width="6" height="11" viewBox="0 0 6 11"><path d="M1 1L4.5 5.5L1 10" stroke="#555" stroke-width="1" fill="none"/></svg>
</div>
<div class="a" style="left:13px;top:37px;width:418px;height:213px;background:transparent;border-radius:0px;border:2px solid #d2202a"></div>
<div class="a" style="left:531px;top:0px;width:493px;height:24px;background:#fafafa;border-radius:0px;"></div>
<div class="a" style="left:531px;top:0px;width:15px;height:23.5px;background:linear-gradient(90deg,#d6d6d6,#ececec 50%,#fafafa);border-radius:0px;"></div>
<div class="a" style="left:531px;top:23.5px;width:493px;height:476.0px;background:#20222a;border-radius:0px;"></div>
<div class="t" style="left:628px;width:300px;text-align:center;top:6.44px;font-size:9.6px;color:#8a8a8a;font-weight:bold;">Propiedades para 'Audio del escritorio'</div>
<div class="a" style="left:592px;top:42px;width:422px;height:18px;background:#3a3d47;border-radius:3px;"></div>
<div class="t" style="left:543px;top:47.37px;font-size:9.1px;color:#d8d8d8;">Dispositivo</div>
<div class="t" style="left:599px;top:47.78px;font-size:9.2px;color:#e6e6e6;">Por defecto</div>
<div class="a" style="left:537px;top:470px;width:82px;height:21px;background:#3a3d47;border-radius:3px;"></div>
<div class="t" style="left:428px;width:300px;text-align:center;top:477.08px;font-size:9.2px;color:#e6e6e6;">Por defecto</div>
<div class="a" style="left:906px;top:470px;width:62px;height:21px;background:#3a3d47;border-radius:3px;"></div>
<div class="t" style="left:787px;width:300px;text-align:center;top:477.08px;font-size:9.2px;color:#e6e6e6;">Cancel</div>
<div class="a" style="left:973px;top:470px;width:48px;height:21px;background:#3a3d47;border-radius:3px;"></div>
<div class="t" style="left:847px;width:300px;text-align:center;top:477.08px;font-size:9.2px;color:#e6e6e6;">OK</div>
<div class="a" style="left:537px;top:33px;width:482px;height:46px;background:transparent;border-radius:0px;border:2.5px solid #e01b24"></div>
<div class="a" style="left:923px;top:487.5px;width:7px;height:1.0px;background:#cfcfcf;border-radius:0px;"></div>
<div class="a" style="left:990.5px;top:487.5px;width:7.5px;height:1.0px;background:#cfcfcf;border-radius:0px;"></div>
<div class="a" style="left:1000px;top:42px;width:14px;height:18px;background:#40434d;border-radius:2px;"></div>
<svg class="a" style="left:1004px;top:45px;" width="7" height="12" viewBox="0 0 7 12"><path d="M1 4L3.5 1.8L6 4M1 8L3.5 10.2L6 8" stroke="#c8c8c8" stroke-width="1" fill="none"/></svg>
<div class="a" style="left:774px;top:31px;width:1px;height:1px;background:#666a72;border-radius:0px;"></div>
<div class="a" style="left:776px;top:31px;width:1px;height:1px;background:#666a72;border-radius:0px;"></div>
<div class="a" style="left:778px;top:31px;width:1px;height:1px;background:#666a72;border-radius:0px;"></div>
<div class="a" style="left:780px;top:31px;width:1px;height:1px;background:#666a72;border-radius:0px;"></div>
<div class="a" style="left:782px;top:31px;width:1px;height:1px;background:#666a72;border-radius:0px;"></div>
<div class="a" style="left:967px;top:12px;width:6px;height:1.1999999999999993px;background:#555;border-radius:0px;"></div>
<div class="a" style="left:989.7px;top:8.3px;width:5.899999999999977px;height:5.5px;background:transparent;border-radius:0.5px;border:1.1px solid #555"></div>
<svg class="a" style="left:1013px;top:8.3px;" width="6" height="6" viewBox="0 0 6 6"><path d="M0.5 0.5L5.5 5.5M5.5 0.5L0.5 5.5" stroke="#555" stroke-width="1.1"/></svg>
</body></html>
